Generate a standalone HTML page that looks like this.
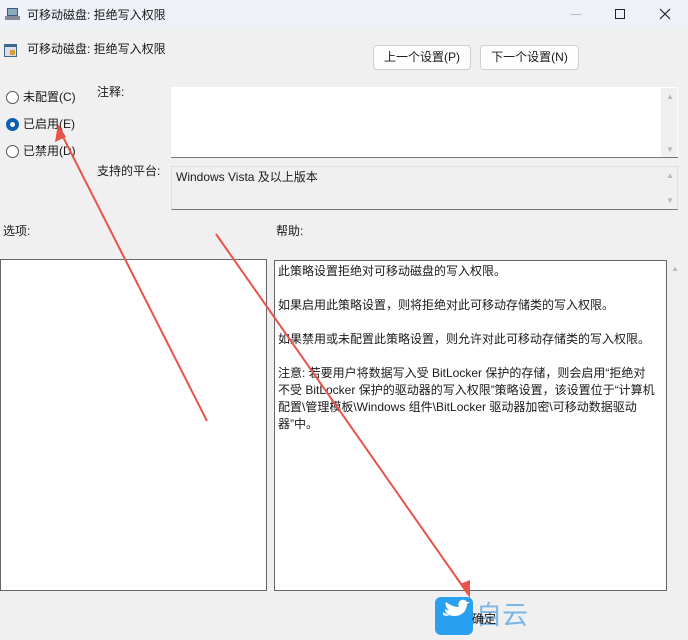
<!DOCTYPE html>
<html><head><meta charset="utf-8"><style>
*{margin:0;padding:0;box-sizing:border-box}
body{width:688px;height:640px;overflow:hidden;background:#f0f0f0;position:relative;font-family:"Liberation Sans","Noto Sans CJK SC",sans-serif;font-size:12px;color:#1a1a1a}
.a{position:absolute;white-space:nowrap;line-height:14px}
.box{position:absolute;background:#fff}
.btn{position:absolute;background:#fdfdfd;border:1px solid #d0d0d0;border-radius:4px;text-align:center;line-height:23px;font-size:12px}
.rad{position:absolute;width:13px;height:13px;border:1px solid #555;border-radius:50%;background:#fff}
.sb{position:absolute;color:#b8b8b8;font-size:8px;line-height:8px}
</style></head><body>
<div style="position:absolute;left:0;top:0;width:688px;height:28px;background:#eef2f8"></div>
<svg style="position:absolute;left:5px;top:7px" width="16" height="14"><rect x="2" y="1" width="11" height="8" fill="#3a5a8a"/><rect x="3" y="2" width="9" height="6" fill="#8ab"/><rect x="0" y="9" width="15" height="4" fill="#889"/></svg>
<div class="a" style="left:27px;top:8px">可移动磁盘: 拒绝写入权限</div>
<div style="position:absolute;left:571px;top:14px;width:10px;height:1px;background:#bbb"></div>
<div style="position:absolute;left:615px;top:9px;width:10px;height:10px;border:1px solid #222"></div>
<svg style="position:absolute;left:659px;top:8px" width="12" height="12"><path d="M1 1L11 11M11 1L1 11" stroke="#222" stroke-width="1.2"/></svg>
<svg style="position:absolute;left:4px;top:42px" width="14" height="16"><rect x="0" y="2" width="13" height="13" fill="#3a6a8a"/><rect x="1" y="5" width="11" height="9" fill="#dde"/><rect x="6" y="8" width="5" height="5" fill="#d9a030"/></svg>
<div class="a" style="left:27px;top:42px">可移动磁盘: 拒绝写入权限</div>
<div class="btn" style="left:373px;top:45px;width:98px;height:25px">上一个设置(P)</div>
<div class="btn" style="left:480px;top:45px;width:99px;height:25px">下一个设置(N)</div>
<div class="rad" style="left:6px;top:91px"></div><div class="a" style="left:23px;top:90px">未配置(C)</div>
<div class="rad" style="left:6px;top:118px;border:4px solid #0a5fb4"></div><div class="a" style="left:23px;top:117px">已启用(E)</div>
<div class="rad" style="left:6px;top:145px"></div><div class="a" style="left:23px;top:144px">已禁用(D)</div>
<div class="a" style="left:97px;top:85px">注释:</div>
<div class="box" style="left:171px;top:87px;width:507px;height:71px;border-bottom:1px solid #777"></div>
<div style="position:absolute;left:661px;top:88px;width:16px;height:69px;background:#f0f0f0"></div>
<div class="sb" style="left:666px;top:93px">▲</div><div class="sb" style="left:666px;top:146px">▼</div>
<div class="a" style="left:97px;top:164px">支持的平台:</div>
<div style="position:absolute;left:171px;top:166px;width:507px;height:44px;border:1px solid #e0e0e0;border-bottom:1px solid #777"></div>
<div class="a" style="left:176px;top:170px">Windows Vista 及以上版本</div>
<div class="sb" style="left:666px;top:172px">▲</div><div class="sb" style="left:666px;top:197px">▼</div>
<div class="a" style="left:3px;top:224px">选项:</div>
<div class="a" style="left:276px;top:224px">帮助:</div>
<div class="box" style="left:0;top:259px;width:267px;height:332px;border:1px solid #666"></div>
<div class="box" style="left:274px;top:260px;width:393px;height:331px;border:1px solid #666"></div>
<div class="sb" style="left:671px;top:265px">▲</div>
<div style="position:absolute;left:278px;top:263px;line-height:17px">此策略设置拒绝对可移动磁盘的写入权限。<br><br>如果启用此策略设置，则将拒绝对此可移动存储类的写入权限。<br><br>如果禁用或未配置此策略设置，则允许对此可移动存储类的写入权限。<br><br>注意: 若要用户将数据写入受 BitLocker 保护的存储，则会启用“拒绝对<br>不受 BitLocker 保护的驱动器的写入权限”策略设置，该设置位于“计算机<br>配置\管理模板\Windows 组件\BitLocker 驱动器加密\可移动数据驱动<br>器”中。</div>
<svg style="position:absolute;left:0;top:0" width="688" height="640">
<path d="M207 421L58 127" stroke="#e8544a" stroke-width="2" fill="none"/>
<path d="M58 124L55 142L66 137Z" fill="#e8544a"/>
<path d="M216 234L468 594" stroke="#e8544a" stroke-width="2" fill="none"/>
<path d="M470 598L460 584L470 580Z" fill="#e8544a"/>
<rect x="435" y="597" width="38" height="38" rx="6" fill="#2aa0f0"/>
<path d="M443 612c6 4 12 5 17 3c4-2 7-6 7-11l3-2l-3 0c-2-3-6-3-8 0c-1 2-1 3 0 5c-5 0-9-2-13-5c-1 3 0 6 3 8c-2 0-3 0-4-1c0 3 2 5 5 6c-2 1-4 1-7 0z" fill="#fff"/>
<text x="476" y="624" font-size="26" fill="#4a9ee0" opacity="0.7" font-family="Noto Sans CJK SC">自云</text>
</svg>
<div class="a" style="left:472px;top:612px;color:#111">确定</div>
</body></html>
